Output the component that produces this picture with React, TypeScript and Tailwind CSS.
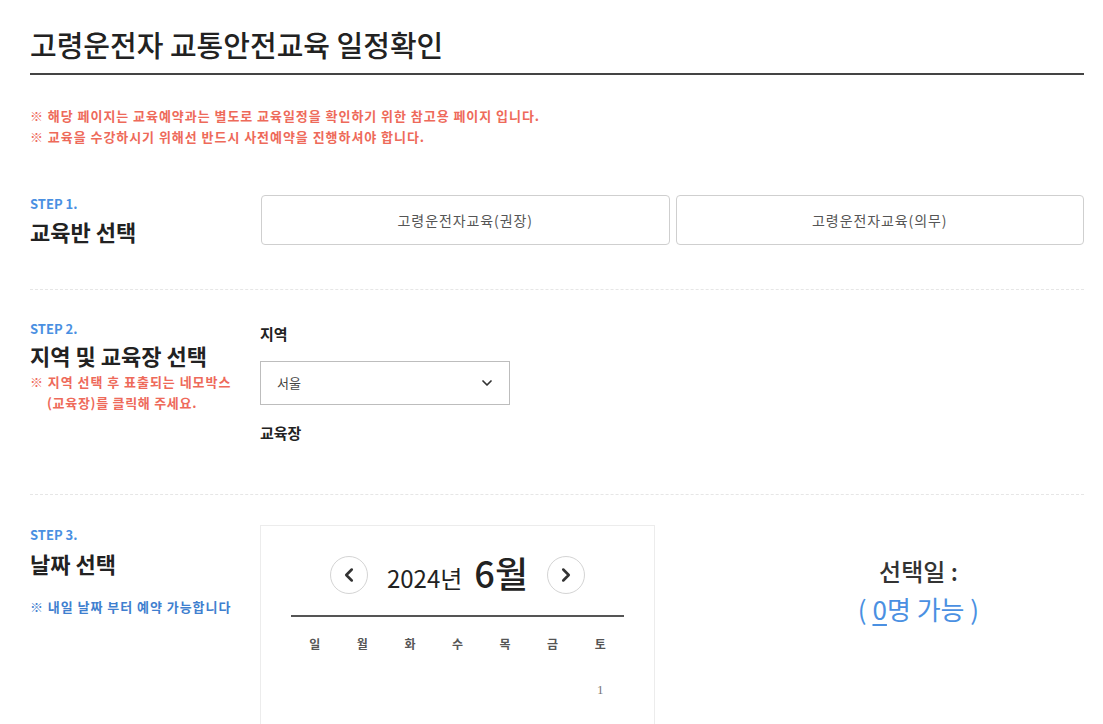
import { ChevronDown, ChevronLeft, ChevronRight } from "lucide-react";

const font = { fontFamily: '"Noto Sans CJK KR", "Noto Sans", sans-serif' };

const weekdays = ["일", "월", "화", "수", "목", "금", "토"];

function App() {
  return (
    <div className="min-h-screen bg-white text-[#222]" style={font}>
      <div className="pl-[30px] pr-[19px]">
        <div className="pt-[24px] pb-[9px] border-b-2 border-[#444]">
          <h1 className="text-[29px] leading-[40px] font-medium text-[#222]">
            고령운전자 교통안전교육 일정확인
          </h1>
        </div>

        <div className="pt-[30px] text-[13px] leading-[21px] font-bold text-[#ee6a5a] tracking-[0.95px]">
          <p>※ 해당 페이지는 교육예약과는 별도로 교육일정을 확인하기 위한 참고용 페이지 입니다.</p>
          <p>※ 교육을 수강하시기 위해선 반드시 사전예약을 진행하셔야 합니다.</p>
        </div>

        {/* STEP 1 */}
        <div className="flex pt-[48px] pb-[44px] border-b border-dashed border-[#e6e6e6]">
          <div className="w-[231px] shrink-0 pt-[1px]">
            <p className="text-[13px] leading-[16px] font-bold text-[#4a90e2]">STEP 1.</p>
            <p className="mt-[5px] text-[22px] leading-[28px] font-semibold">교육반 선택</p>
          </div>
          <div className="flex-1 grid grid-cols-2 gap-[6px]">
            <button className="h-[50px] rounded-[4px] border border-[#cfcfcf] bg-white text-[14px] text-[#555] tracking-[0.9px]">
              고령운전자교육(권장)
            </button>
            <button className="h-[50px] rounded-[4px] border border-[#cfcfcf] bg-white text-[14px] text-[#555] tracking-[0.9px]">
              고령운전자교육(의무)
            </button>
          </div>
        </div>

        {/* STEP 2 */}
        <div className="flex pt-[31px] pb-[50px] border-b border-dashed border-[#e6e6e6]">
          <div className="w-[230px] shrink-0">
            <p className="text-[13px] leading-[16px] font-bold text-[#4a90e2]">STEP 2.</p>
            <p className="mt-[4px] text-[22px] leading-[28px] font-semibold">지역 및 교육장 선택</p>
            <p className="mt-[2px] text-[13px] leading-[21px] font-bold text-[#ee6a5a] tracking-[0.95px]">
              ※ 지역 선택 후 표출되는 네모박스
            </p>
            <p className="pl-[17px] text-[13px] leading-[21px] font-bold text-[#ee6a5a] tracking-[0.7px]">
              (교육장)를 클릭해 주세요.
            </p>
          </div>
          <div className="flex-1">
            <p className="text-[15px] leading-[22px] font-bold pt-[2px]">지역</p>
            <div className="mt-[16px] w-[250px] h-[44px] border border-[#bdbdbd] flex items-center justify-between pl-[16px] pr-[14px] text-[13px] text-[#444]">
              <span>서울</span>
              <ChevronDown size={16} strokeWidth={2.6} className="text-[#333]" />
            </div>
            <p className="mt-[17px] text-[15px] leading-[22px] font-bold">교육장</p>
          </div>
        </div>

        {/* STEP 3 */}
        <div className="flex pt-[30px]">
          <div className="w-[230px] shrink-0 pt-[2px]">
            <p className="text-[13px] leading-[16px] font-bold text-[#4a90e2]">STEP 3.</p>
            <p className="mt-[6px] text-[22px] leading-[28px] font-semibold">날짜 선택</p>
            <p className="mt-[20px] text-[13px] leading-[20px] font-bold text-[#3f7fcf] tracking-[0.95px]">
              ※ 내일 날짜 부터 예약 가능합니다
            </p>
          </div>
          <div className="w-[395px] shrink-0 h-[240px] border border-[#ececec] border-b-0 px-[30px] pt-[26px]">
            <div className="flex items-center justify-center">
              <button className="w-[38px] h-[38px] rounded-full border border-[#d4d4d4] flex items-center justify-center text-[#333]">
                <ChevronLeft size={22} strokeWidth={2.8} />
              </button>
              <div className="mx-[19px] flex items-baseline">
                <span className="text-[24px] leading-[40px] text-[#222]">2024년</span>
                <span className="ml-[12px] text-[36px] leading-[40px] font-medium text-[#222]">6월</span>
              </div>
              <button className="w-[38px] h-[38px] rounded-full border border-[#d4d4d4] flex items-center justify-center text-[#333]">
                <ChevronRight size={22} strokeWidth={2.8} />
              </button>
            </div>
            <div className="mt-[17px] border-t-2 border-[#555]"></div>
            <div className="grid grid-cols-7 mt-[17px]">
              {weekdays.map((d) => (
                <div key={d} className="text-center text-[12px] leading-[20px] font-bold text-[#555]">
                  {d}
                </div>
              ))}
            </div>
            <div className="grid grid-cols-7 mt-[26px]">
              {[0, 1, 2, 3, 4, 5].map((i) => (
                <div key={i}></div>
              ))}
              <div
                className="text-center text-[13px] leading-[20px] text-[#777]"
                style={{ fontFamily: '"Liberation Serif", serif' }}
              >
                1
              </div>
            </div>
          </div>
          <div className="flex-1 pl-[98px] pt-[30px] text-center">
            <p className="text-[24px] leading-[32px] font-medium text-[#333]">선택일 :</p>
            <p className="mt-[6px] text-[26px] leading-[32px] text-[#4a90e2]">
              ( <span className="underline underline-offset-[4px]">0</span>명 가능 )
            </p>
          </div>
        </div>
      </div>
    </div>
  );
}

export default App;
